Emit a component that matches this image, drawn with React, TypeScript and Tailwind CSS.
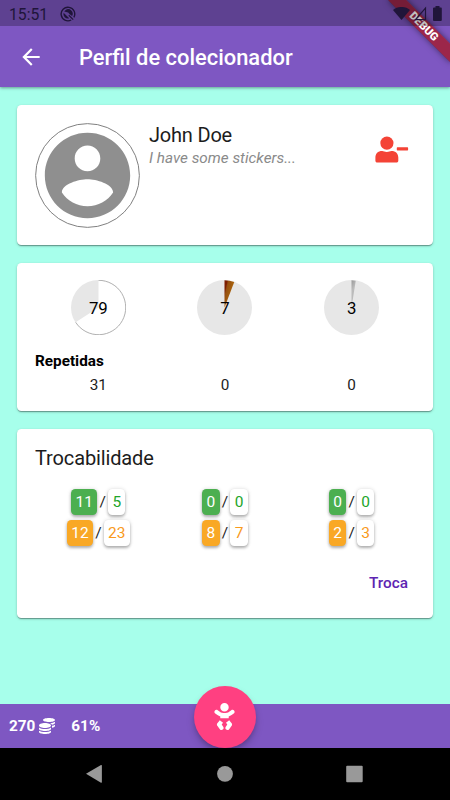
import React from "react";
import { FaBaby, FaCoins } from "react-icons/fa";
import { MdArrowBack } from "react-icons/md";

const TOTAL = 120;

interface Group {
  id: string;
  owned: number;
  repeated: number;
  green: [number, number];
  orange: [number, number];
}

const groups: Group[] = [
  { id: "plain", owned: 79, repeated: 31, green: [11, 5], orange: [12, 23] },
  { id: "bronze", owned: 7, repeated: 0, green: [0, 0], orange: [8, 7] },
  { id: "silver", owned: 3, repeated: 0, green: [0, 0], orange: [2, 3] },
];

// translucent, so the app's own banner shows through underneath
function StatusBar() {
  return (
    <div className="relative z-30 flex h-[26px] items-center bg-black/25 pr-[8.5px] pl-[9px] text-[#20153a]">
      <span className="mt-[3px] text-[15.7px] leading-none">15:51</span>
      <svg className="mt-[1px] ml-[12px]" width="16" height="16" viewBox="0 0 16 16" fill="none" stroke="currentColor">
        <path d="M11.2 14A6.8 6.8 0 1 1 13.9 11.3" strokeWidth="1.4" />
        <path d="M4.2 5.4 5.7 3.9a4.6 4.6 0 0 1 6.4 6.2L9.7 8.3 8.2 6.4z" fill="currentColor" stroke="none" />
        <path d="M3.6 6.8 9.2 12.3A4.4 4.4 0 0 1 3.6 6.8z" fill="currentColor" stroke="none" />
        <path d="M8.8 9.3l4.4 4.3" strokeWidth="1.2" />
      </svg>
      <div className="ml-auto flex items-center">
        <svg width="17" height="13" viewBox="0 0 17 13" fill="currentColor">
          <path d="M8.5 13 0 2.9C4.8-1 12.2-1 17 2.9z" />
        </svg>
        <svg className="ml-[4px]" width="13" height="15" viewBox="0 0 13 15" fill="none" stroke="currentColor" strokeWidth="1.2">
          <path d="M1.4 13.7 11.5 2v11.7z" />
        </svg>
        <svg className="ml-[6px]" width="9" height="15" viewBox="0 0 9 15" fill="currentColor">
          <path d="M2.5 0h4v1.6H8a1 1 0 0 1 .8 1V14a1 1 0 0 1-1 1H1a1 1 0 0 1-1-1V2.6a1 1 0 0 1 1-1h1.5z" />
        </svg>
      </div>
    </div>
  );
}

function DebugBanner() {
  return (
    <div className="pointer-events-none absolute top-0 right-0 z-20 size-[80px] overflow-hidden">
      <div className="absolute top-[19.7px] left-[10px] flex h-[13.1px] w-[87.5px] rotate-45 items-center justify-center bg-[#a8141cb8] text-[11.2px] leading-none font-black text-white shadow-[0_0_6px_rgba(0,0,0,0.5)]">
        DEBUG
      </div>
    </div>
  );
}

function Card({ className, children }: { className?: string; children: React.ReactNode }) {
  return (
    <section
      className={`mr-[17.5px] ml-[17px] rounded-[4.4px] bg-white pr-[17.5px] pl-[18px] shadow-[0_2px_1px_-1px_rgba(0,0,0,0.2),0_1px_1px_rgba(0,0,0,0.14),0_1px_3px_rgba(0,0,0,0.2)] ${className || ""}`.trim()}
    >
      {children}
    </section>
  );
}

function Avatar() {
  return (
    <svg width="105" height="105" viewBox="-0.3 -0.3 24.6 24.6">
      <circle cx="12" cy="12" r="12.15" fill="#fff" stroke="#777" strokeWidth="0.22" />
      <path
        fill="#8f8f8f"
        d="M12 2C6.48 2 2 6.48 2 12s4.48 10 10 10 10-4.48 10-10S17.52 2 12 2zm0 3c1.66 0 3 1.34 3 3s-1.34 3-3 3-3-1.34-3-3 1.34-3 3-3zm0 14.2c-2.5 0-4.71-1.28-6-3.22.03-1.99 4-3.08 6-3.08 1.99 0 5.97 1.09 6 3.08-1.29 1.94-3.5 3.22-6 3.22z"
      />
    </svg>
  );
}

function RemoveUserIcon() {
  return (
    <svg width="34" height="28" viewBox="0 0 34 28" fill="#f44336">
      <circle cx="11.9" cy="7.1" r="6.6" />
      <path d="M7.2 15c1.4 0 2.6.9 4.6.9s3.2-.9 4.6-.9c4.4 0 6.9 2.6 6.9 6.6v3.2c0 1.2-.8 1.8-1.9 1.8H2.3C1.2 26.6.4 26 .4 24.8v-3.2C.4 17.6 2.8 15 7.2 15z" />
      <rect x="21.8" y="11.3" width="11.3" height="3.1" rx="0.6" />
    </svg>
  );
}

function Pie({ id, value }: { id: string; value: number }) {
  const angle = (value / TOTAL) * Math.PI * 2;
  const r = 27.2;
  const x = 27.5 + r * Math.sin(angle);
  const y = 27.5 - r * Math.cos(angle);
  const large = angle > Math.PI ? 1 : 0;
  const wedge = `M27.5 27.5V${27.5 - r}A${r} ${r} 0 ${large} 1 ${x} ${y}z`;
  const arc = `M27.5 ${27.5 - r}A${r} ${r} 0 ${large} 1 ${x} ${y}`;
  return (
    <div className="relative flex size-[55px] items-center justify-center">
      <svg className="absolute inset-0" width="55" height="55" viewBox="0 0 55 55">
        <defs>
          <linearGradient id="bronze" gradientUnits="userSpaceOnUse" x1="27.5" y1="12" x2="36" y2="14">
            <stop offset="0" stopColor="#7c1d00" />
            <stop offset="0.15" stopColor="#954f10" />
            <stop offset="1" stopColor="#b06a0c" />
          </linearGradient>
          <linearGradient id="silver" gradientUnits="userSpaceOnUse" x1="27" y1="1" x2="32" y2="4">
            <stop offset="0" stopColor="#999" />
            <stop offset="1" stopColor="#bbb" />
          </linearGradient>
        </defs>
        <circle cx="27.5" cy="27.5" r="27.5" fill="#e7e7e7" />
        <path d={wedge} fill={id === "plain" ? "#fff" : `url(#${id})`} />
        {id === "plain" && <path d={arc} fill="none" stroke="#aaa" strokeWidth="0.9" />}
      </svg>
      <span className="relative mt-[1px] text-[16.8px] leading-none text-black">{value}</span>
    </div>
  );
}

function Chip({ className, children }: { className: string; children: React.ReactNode }) {
  return (
    <span
      className={`flex h-[26px] items-center rounded-[4.4px] px-[4.3px] pt-[1px] shadow-[0_2px_3px_rgba(0,0,0,0.28),0_0_4px_rgba(0,0,0,0.13)] ${className}`}
    >
      {children}
    </span>
  );
}

function Tradeability({ group }: { group: Group }) {
  return (
    <div className="flex flex-col items-center gap-[5px] text-[15.5px] leading-none">
      <div className="flex items-center gap-[2.2px]">
        <Chip className="bg-[#4caf50] text-white">{group.green[0]}</Chip>
        <span className="pt-[1px]">/</span>
        <Chip className="bg-white text-[#22a52a]">{group.green[1]}</Chip>
      </div>
      <div className="flex items-center gap-[2.2px]">
        <Chip className="bg-[#f9a825] text-white">{group.orange[0]}</Chip>
        <span className="pt-[1px]">/</span>
        <Chip className="bg-white text-[#f99a1c]">{group.orange[1]}</Chip>
      </div>
    </div>
  );
}

function BottomBar() {
  return (
    <footer className="relative flex h-[44.5px] items-center bg-[#7e57c2] pl-[9px] text-[15.3px] leading-none font-bold text-white">
      <span className="mt-[2px]">270</span>
      <FaCoins className="ml-[4px] size-[16px]" />
      <span className="mt-[2px] ml-[16px]">61%</span>
      <button className="absolute top-[-17.5px] left-[194px] flex size-[61.5px] items-center justify-center rounded-full bg-[#ff4081] shadow-[0_3px_5px_-1px_rgba(0,0,0,0.2),0_5px_8px_rgba(0,0,0,0.14)]">
        <FaBaby className="size-[27px]" />
      </button>
    </footer>
  );
}

function NavBar() {
  return (
    <nav className="relative flex h-[52px] items-center bg-black">
      <svg width="450" height="52" viewBox="0 0 450 52" fill="#999">
        <path d="M86 25.8 101 17q.9-.2.9.7v16.4q0 .9-.9.6z" />
        <circle cx="225" cy="25.8" r="7.9" />
        <rect x="346.2" y="17.7" width="16.5" height="16.5" rx="1" />
      </svg>
    </nav>
  );
}

export default function App() {
  return (
    <div className="relative flex h-[800px] w-[450px] flex-col overflow-hidden bg-[#a7ffeb] font-['Roboto',sans-serif] text-[#1c1c1c]">
      <header className="bg-[#7e57c2] text-white shadow-[0_1px_3px_rgba(0,0,0,0.4)]">
        <StatusBar />
        <div className="flex h-[61px] items-center pl-[18px]">
          <MdArrowBack className="size-[26px]" />
          <h1 className="mt-[2px] ml-[35px] text-[21.9px] leading-none font-medium">Perfil de colecionador</h1>
        </div>
      </header>
      <DebugBanner />

      <main className="flex flex-1 flex-col gap-[18px] pt-[18px]">
        <Card className="flex h-[140px] items-start pt-[17.5px]">
          <Avatar />
          <div className="ml-[9px] pt-[2px]">
            <h2 className="text-[20px] leading-[20px] tracking-[-0.2px]">John Doe</h2>
            <p className="mt-[4.5px] text-[15.3px] leading-[18px] text-[#8a8a8a] italic">I have some stickers...</p>
          </div>
          <div className="mt-[13px] mr-[6.5px] ml-auto">
            <RemoveUserIcon />
          </div>
        </Card>

        <Card className="h-[148px] pt-[17px]">
          <div className="grid grid-cols-3 justify-items-center">
            {groups.map((g) => (
              <Pie key={g.id} id={g.id} value={g.owned} />
            ))}
          </div>
          <h3 className="mt-[17px] text-[15.3px] leading-[18px] font-bold text-black">Repetidas</h3>
          <div className="mt-[6px] grid grid-cols-3 text-center text-[15.3px] leading-[18px]">
            {groups.map((g) => (
              <span key={g.id}>{g.repeated}</span>
            ))}
          </div>
        </Card>

        <Card className="h-[189px] pt-[17px]">
          <h2 className="text-[20px] leading-[24px] tracking-[-0.13px]">Trocabilidade</h2>
          <div className="mt-[19px] grid grid-cols-3">
            {groups.map((g) => (
              <Tradeability key={g.id} group={g} />
            ))}
          </div>
          <button className="mt-[28px] mr-[7px] ml-auto block text-[15.3px] leading-[18px] font-medium text-[#5e24b2]">
            Troca
          </button>
        </Card>
      </main>

      <BottomBar />
      <NavBar />
    </div>
  );
}
